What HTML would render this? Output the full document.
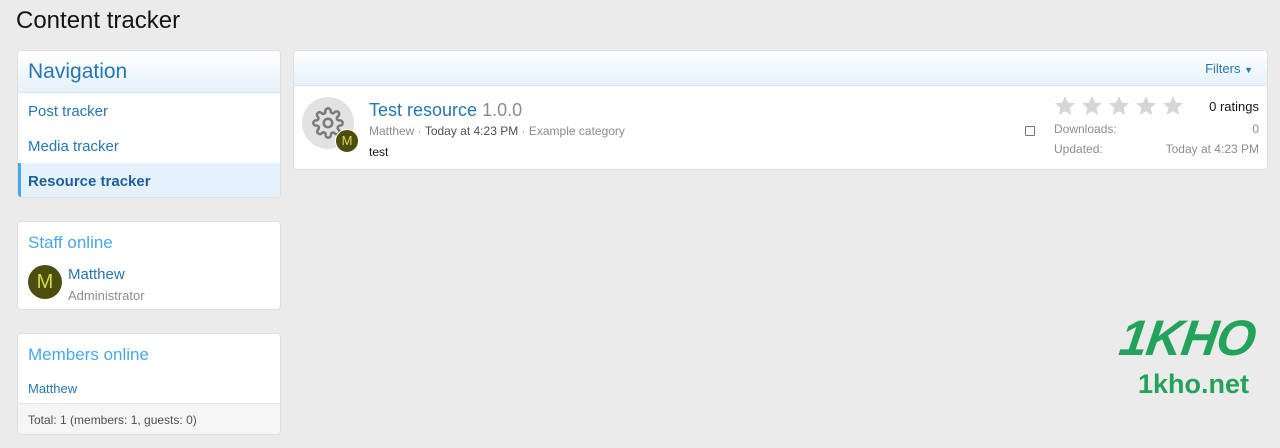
<!DOCTYPE html>
<html><head><meta charset="utf-8"><style>
*{box-sizing:border-box;margin:0;padding:0}
body{width:1280px;height:448px;background:#ebebeb;font-family:"Liberation Sans",sans-serif;position:relative;overflow:hidden;color:#141414}
.a{position:absolute;white-space:nowrap}
.blk{position:absolute;background:#fff;border:1px solid #dfdfdf;border-radius:4px;overflow:hidden}
.lnk{color:#2577b1}
</style></head><body>
<div class="a" style="left:16px;top:7px;font-size:24px;color:#141414">Content tracker</div>

<div class="blk" style="left:17px;top:50px;width:264px;height:148px">
 <div style="height:42px;background:linear-gradient(#fff,#e5f1fa);border-bottom:1px solid #d8e6f1"></div>
 <div class="a" style="left:10px;top:9px;font-size:21px;color:#2577b1">Navigation</div>
 <div class="a lnk" style="left:10px;top:52px;font-size:15px">Post tracker</div>
 <div class="a lnk" style="left:10px;top:87px;font-size:15px">Media tracker</div>
 <div style="position:absolute;left:0;top:112px;width:264px;height:36px;background:#e6f2fb;border-left:3px solid #47a7eb"></div>
 <div class="a" style="left:10px;top:122px;font-size:15px;font-weight:bold;color:#1d609a">Resource tracker</div>
</div>

<div class="blk" style="left:17px;top:221px;width:264px;height:89px">
 <div class="a" style="left:10px;top:11px;font-size:17px;color:#47a7eb">Staff online</div>
 <div style="position:absolute;left:10px;top:43px;width:34px;height:34px;border-radius:50%;background:#4d4d10;color:#d7d94e;font-size:20px;text-align:center;line-height:34px">M</div>
 <div class="a lnk" style="left:50px;top:44px;font-size:15px">Matthew</div>
 <div class="a" style="left:50px;top:66px;font-size:13px;color:#8c8c8c">Administrator</div>
</div>

<div class="blk" style="left:17px;top:333px;width:264px;height:102px">
 <div class="a" style="left:10px;top:11px;font-size:17px;color:#47a7eb">Members online</div>
 <div class="a lnk" style="left:10px;top:47px;font-size:13px">Matthew</div>
 <div style="position:absolute;left:0;top:69px;width:264px;height:33px;background:#f5f5f5;border-top:1px solid #e8e8e8"></div>
 <div class="a" style="left:10px;top:79px;font-size:12px;color:#505050">Total: 1 (members: 1, guests: 0)</div>
</div>

<div class="blk" style="left:293px;top:50px;width:975px;height:120px">
 <div style="height:35px;background:linear-gradient(#fff,#e5f1fa);border-bottom:1px solid #d8e6f1"></div>
 <div class="a lnk" style="right:14px;top:10px;font-size:13px">Filters <span style="font-size:9px">▼</span></div>
 <div style="position:absolute;left:8px;top:46px;width:52px;height:52px;border-radius:50%;background:#e2e2e2"></div>
 <svg style="position:absolute;left:18px;top:56px" width="32" height="32" viewBox="0 0 24 24" fill="none" stroke="#7a7a7a" stroke-width="1.9"><circle cx="12" cy="12" r="3.2"/><path d="M19.4 15a1.6 1.6 0 0 0 .3 1.8l.1.1a2 2 0 1 1-2.8 2.8l-.1-.1a1.6 1.6 0 0 0-2.7 1.1V21a2 2 0 1 1-4 0v-.1A1.6 1.6 0 0 0 7.6 19.4l-.1.1a2 2 0 1 1-2.8-2.8l.1-.1A1.6 1.6 0 0 0 3.6 14H3a2 2 0 1 1 0-4h.1A1.6 1.6 0 0 0 4.6 7.6l-.1-.1a2 2 0 1 1 2.8-2.8l.1.1A1.6 1.6 0 0 0 10 3.6V3a2 2 0 1 1 4 0v.1a1.6 1.6 0 0 0 2.7 1.1l.1-.1a2 2 0 1 1 2.8 2.8l-.1.1A1.6 1.6 0 0 0 20.4 10H21a2 2 0 1 1 0 4h-.1a1.6 1.6 0 0 0-1.5 1z"/></svg>
 <div style="position:absolute;left:41px;top:78px;width:24px;height:24px;border-radius:50%;background:#4d4d10;border:1px solid #fff;color:#d7d94e;font-size:13px;text-align:center;line-height:22px">M</div>
 <div class="a" style="left:75px;top:49px;font-size:18px"><span class="lnk">Test resource</span> <span style="color:#8c8c8c">1.0.0</span></div>
 <div class="a" style="left:75px;top:73px;font-size:12px;color:#8c8c8c">Matthew · <span style="color:#505050">Today at 4:23 PM</span> · Example category</div>
 <div class="a" style="left:75px;top:94px;font-size:12px">test</div>
 <div style="position:absolute;left:731px;top:75px;width:10px;height:10px;border:1px solid #777;border-radius:1px"></div>
 <svg style="position:absolute;left:760px;top:44px" width="132" height="24" viewBox="0 0 132 24">
  <g fill="#d6d6d6">
   <path id="s" d="M11 1 L13.9 7.6 L21 8.2 L15.6 12.9 L17.3 20 L11 16.2 L4.7 20 L6.4 12.9 L1 8.2 L8.1 7.6 Z"/>
   <use href="#s" x="27"/><use href="#s" x="54"/><use href="#s" x="81"/><use href="#s" x="108"/>
  </g>
 </svg>
 <div class="a" style="right:8px;top:48px;font-size:13px">0 ratings</div>
 <div class="a" style="left:760px;top:71px;font-size:12px;color:#8c8c8c">Downloads:</div>
 <div class="a" style="right:8px;top:71px;font-size:12px;color:#8c8c8c">0</div>
 <div class="a" style="left:760px;top:91px;font-size:12px;color:#8c8c8c">Updated:</div>
 <div class="a" style="right:8px;top:91px;font-size:12px;color:#8c8c8c">Today at 4:23 PM</div>
</div>

<div class="a" style="left:1120px;top:309px;font-size:50px;font-weight:bold;font-style:italic;color:#23a25a;letter-spacing:-1px;transform:skewX(-8deg)">1KHO</div>
<div class="a" style="left:1138px;top:369px;font-size:27px;font-weight:bold;color:#23a25a">1kho.net</div>
</body></html>
